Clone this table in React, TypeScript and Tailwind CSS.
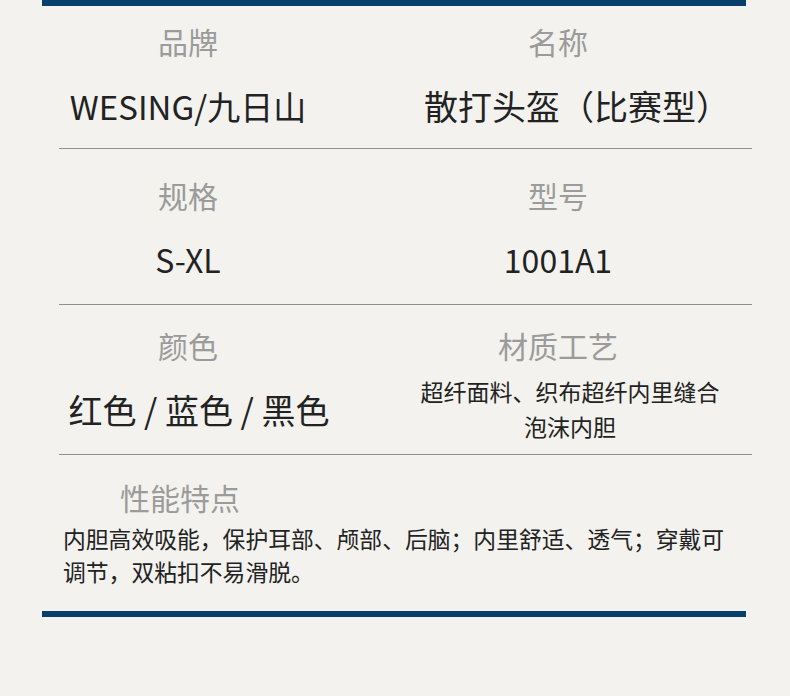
const font = { fontFamily: '"Noto Sans CJK SC", "Noto Sans", sans-serif' };

const Bar = () => <div className="ml-[42px] h-[6px] w-[704px] bg-[#063f6b]" />;

const Rule = () => <div className="ml-[59px] h-px w-[693px] bg-[#8f8f8f]" />;

const Label = ({ children }: { children: React.ReactNode }) => (
  <div className="text-[30px] leading-none text-[#9b9b9b]">{children}</div>
);

const App = () => {
  return (
    <div className="h-[696px] w-[790px] bg-[#f3f2ee] text-[#222]" style={font}>
      <Bar />

      <div className="grid h-[142px] grid-cols-[376px_364px] pt-[20px] text-center">
        <div>
          <Label>品牌</Label>
          <div className="mt-[34px] text-[33px] leading-none">WESING/九日山</div>
        </div>
        <div>
          <Label>名称</Label>
          <div className="mt-[33px] whitespace-nowrap pl-[38px] text-[34px] leading-none">散打头盔（比赛型）</div>
        </div>
      </div>
      <Rule />

      <div className="grid h-[155px] grid-cols-[376px_364px] pt-[31px] text-center">
        <div>
          <Label>规格</Label>
          <div className="mt-[33px] text-[32px] leading-none">S-XL</div>
        </div>
        <div>
          <Label>型号</Label>
          <div className="mt-[33px] text-[32px] leading-none">1001A1</div>
        </div>
      </div>
      <Rule />

      <div className="grid h-[149px] grid-cols-[376px_364px] pt-[25px] text-center">
        <div>
          <Label>颜色</Label>
          <div className="mt-[33px] pl-[22px] text-[34px] leading-none">红色 / 蓝色 / 黑色</div>
        </div>
        <div>
          <Label>材质工艺</Label>
          <div className="mt-[14px] whitespace-nowrap pl-[24px] text-[23px] leading-[35px]">
            超纤面料、织布超纤内里缝合
            <br />
            泡沫内胆
          </div>
        </div>
      </div>
      <Rule />

      <div className="pt-[27px]">
        <div className="pl-[120px]">
          <Label>性能特点</Label>
        </div>
        <p className="mt-[10px] whitespace-nowrap pl-[63px] text-[22.8px] leading-[33px]">
          内胆高效吸能，保护耳部、颅部、后脑；内里舒适、透气；穿戴可
          <br />
          调节，双粘扣不易滑脱。
        </p>
      </div>

      <div className="mt-[23px]">
        <Bar />
      </div>
    </div>
  );
};

export default App;
